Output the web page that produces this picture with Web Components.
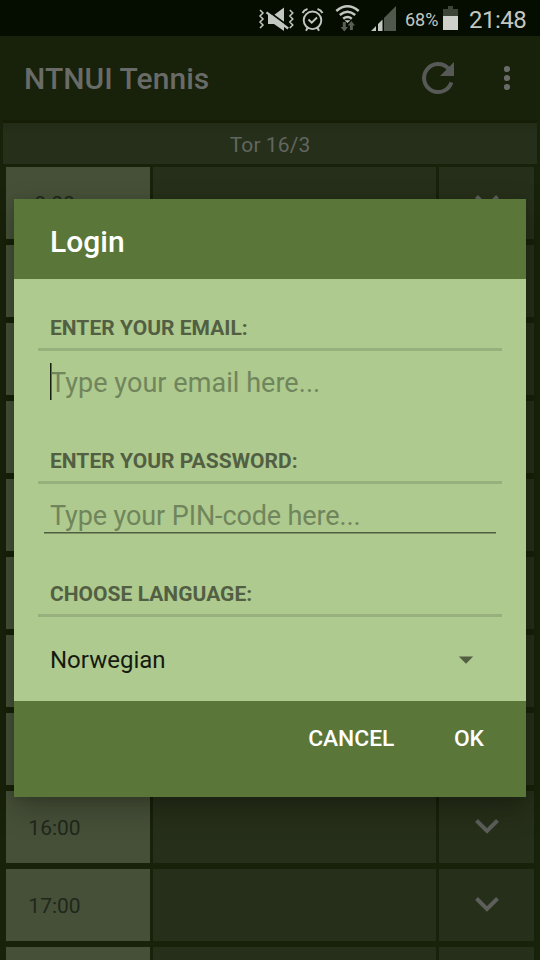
<!DOCTYPE html>
<html lang="en">
<head>
<meta charset="utf-8">
<title>NTNUI Tennis</title>
<style>
html,body{margin:0;height:100%;overflow:hidden}
body{font-family:Roboto,"Noto Sans",sans-serif;background:#182109}
</style>
</head>
<body>
<tennis-app></tennis-app>
<script>
const define = (name, html) => customElements.define(name, class extends HTMLElement {
  constructor() {
    super();
    this.attachShadow({mode: 'open'}).innerHTML = html;
  }
});

define('status-bar', `
<style>
:host{display:flex;height:36px;background:#040d00;color:#c3c7c1;box-sizing:border-box;overflow:hidden}
svg{display:block;flex:none}
span{line-height:36px;white-space:nowrap}
.pct{font-size:18px;padding-top:2px;width:38px}
.time{font-size:24px;padding-top:2px;margin-left:11px;letter-spacing:-.500px}
</style>
<svg width="405" height="36" viewBox="0 0 405 36" fill="none" stroke="#c3c7c1">
  <path d="M260 10l3 3-3 3 3 3-3 3 3 3-3 3M289.800 10l3 3-3 3 3 3-3 3 3 3-3 3" stroke-width="1.500"/>
  <path d="M268 15h6l10-7.500v23.500l-10-7h-6z" fill="#c3c7c1" stroke="none"/>
  <path d="M267 10.200l21.500 16" stroke="#040d00" stroke-width="1.800"/>
  <path d="M266.500 12.300l21.700 16.200" stroke-width="2.200"/>
  <circle cx="312.500" cy="20.300" r="8.800" stroke-width="1.900"/>
  <path d="M308.500 19.500l3.200 3.200 5.300-5.200M307.500 28l-1.500 2.800M317.500 28l1.500 2.800" stroke-width="1.900"/>
  <path d="M302.500 13q1.500-3 5-4M317.500 9q3.500 1 5 4" stroke-width="2"/>
  <g stroke-width="2.500"><path d="M336.300 11q11.200-9.500 22.400 0M339.800 15q7.700-6.500 15.400 0M343.200 18.700q4.300-3.500 8.600 0"/></g>
  <path d="M344.500 20.200h6l-3 2.700z" fill="#c3c7c1" stroke="none"/>
  <path d="M342.800 22h3v5h2.200l-3.700 4.500-3.700-4.500h2.200zM349.900 30h3v-4.500h2.200l-3.700-4.500-3.700 4.500h2.200z" fill="#595f56" stroke="none"/>
  <path d="M371 31l5-5v5zM378 31v-7l4.500-4.500V31z" fill="#c3c7c1" stroke="none"/>
  <path d="M384 31V18L396 6v25z" fill="#50584d" stroke="none"/>
</svg>
<span class="pct">68%</span>
<svg width="15" height="36" viewBox="0 0 15 36"><path d="M0 9h5V6h5v3h5v7H0z" fill="#3c4538"/><path d="M0 16h15v14H0z" fill="#cdd0cb"/></svg>
<span class="time">21:48</span>`);

define('app-bar', `
<style>
:host{display:flex;height:84px;box-sizing:border-box;padding:0 0 0 24px;align-items:center;background:#182109;color:#696b68}
h1{font-size:30px;font-weight:500;line-height:36px;margin:0;padding-top:1px;flex:1;letter-spacing:.050px}
svg{display:block}
</style>
<h1><slot></slot></h1>
<svg width="120" height="84" viewBox="420 36 120 84">
  <path d="M448.500 68.700A14 14 0 1 0 451.400 82.300" fill="none" stroke="#575956" stroke-width="4"/>
  <path d="M454 62v14h-14z" fill="#575956"/>
  <g fill="#696b68"><circle cx="507" cy="69" r="3.100"/><circle cx="507" cy="78" r="3.100"/><circle cx="507" cy="87" r="3.100"/></g>
</svg>`);

define('date-bar', `
<style>
:host{display:block;border-top:3px solid #151d07;margin:0 3px;box-shadow:-3px 0 #182109}
div{height:41px;line-height:44px;text-align:center;font-size:21px;letter-spacing:.080px;color:#626660;background:linear-gradient(#222b15,#262f19 12px)}
</style>
<div><slot></slot></div>`);

define('slot-row', `
<style>
:host{display:grid;grid-template-columns:144px 283px 95px;grid-template-rows:72px;column-gap:3px;height:72px}
div{background:#262f19;box-sizing:border-box;height:72px}
.time{background:#465038;color:#20271b;font-size:21px;line-height:74px;text-align:center;padding-right:47px}
.more{display:flex;align-items:center;justify-content:center;padding:0 0 3px 1px}
svg{display:block}
</style>
<div class="time"><slot></slot></div><div></div>
<div class="more"><svg width="26" height="18" viewBox="0 0 26 18"><path d="M2.500 3.500L13 14 23.500 3.500" fill="none" stroke="#5c5f5a" stroke-width="4"/></svg></div>`);

define('form-field', `
<style>
:host{display:block;height:133px}
.label{height:69px;box-sizing:border-box;padding:38px 12px 0;font-size:21px;font-weight:700;line-height:22px;letter-spacing:.020px;color:#525f43;white-space:nowrap}
.rule{height:3px;background:#97b07c}
.box{padding:13px 12px 0}
</style>
<div class="label"><slot name="label"></slot></div>
<div class="rule"></div>
<div class="box"><slot></slot></div>`);

define('text-input', `
<style>
:host{display:block;font-size:27px;line-height:36px;color:#70855c;white-space:nowrap;position:relative;padding-top:1px;letter-spacing:.050px}
:host([focused])::before{content:"";position:absolute;left:0;top:-1px;width:1px;height:37px;background:#17200f;border-right:1px solid #60704e}
:host([underlined]){letter-spacing:-.110px}
:host([underlined])::after{content:"";position:absolute;left:-6px;right:-6px;top:35px;height:1px;background:#4f5c41;border-bottom:1px solid #7f9467;box-sizing:content-box}
</style>
<slot></slot>`);

define('language-select', `
<style>
:host{display:flex;justify-content:space-between;align-items:center;font-size:24px;line-height:30px;color:#151a11;padding:15px 16px 0 0}
svg{display:block}
</style>
<slot></slot><svg width="16" height="8" viewBox="0 0 16 8"><path d="M.800.500h14.400L8 7.700z" fill="#525f43"/></svg>`);

define('login-dialog', `
<style>
:host{display:flex;flex-direction:column;width:512px;height:598px;box-shadow:0 12px 28px rgba(0,0,0,.26),0 2px 8px rgba(0,0,0,.1)}
header{height:80px;box-sizing:border-box;background:#5a7638;color:#fff;padding:6px 36px 0;font-size:30px;font-weight:500;line-height:74px}
main{height:422px;box-sizing:border-box;background:#aeca8e;padding:0 24px}
footer{height:96px;box-sizing:border-box;background:#5a7638;color:#fff;display:flex;justify-content:flex-end;gap:59.500px;padding:23px 42px 0;font-size:22.800px;font-weight:500;line-height:30px}
</style>
<header><slot name="title"></slot></header><main><slot></slot></main><footer><slot name="actions"></slot></footer>`);

define('tennis-app', `
<style>
:host{display:block;position:relative;width:540px;height:960px;overflow:hidden;background:#182109}
.rows{display:grid;gap:6px;padding:3px 6px 0}
login-dialog{position:absolute;left:14px;top:199px}
</style>
<status-bar></status-bar>
<app-bar>NTNUI Tennis</app-bar>
<date-bar>Tor 16/3</date-bar>
<div class="rows">
<slot-row>8:00</slot-row><slot-row></slot-row><slot-row></slot-row><slot-row></slot-row><slot-row></slot-row><slot-row></slot-row><slot-row></slot-row><slot-row></slot-row>
<slot-row>16:00</slot-row><slot-row>17:00</slot-row><slot-row></slot-row>
</div>
<login-dialog>
  <span slot="title">Login</span>
  <form-field><span slot="label">ENTER YOUR EMAIL:</span><text-input focused>Type your email here...</text-input></form-field>
  <form-field><span slot="label">ENTER YOUR PASSWORD:</span><text-input underlined>Type your PIN-code here...</text-input></form-field>
  <form-field><span slot="label">CHOOSE LANGUAGE:</span><language-select>Norwegian</language-select></form-field>
  <span slot="actions">CANCEL</span><span slot="actions">OK</span>
</login-dialog>`);
</script>
</body>
</html>
